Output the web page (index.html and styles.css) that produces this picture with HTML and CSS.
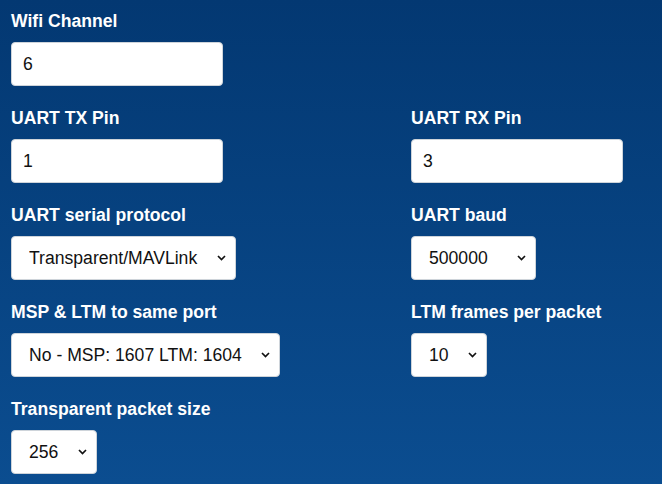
FILE: index.html
```html
<!DOCTYPE html>
<html>
<head>
<meta charset="utf-8">
<link rel="stylesheet" href="styles.css">
</head>
<body>
<div class="form">
  <div class="row">
    <div class="field">
      <label class="label">Wifi Channel</label>
      <input class="input" type="text" value="6">
    </div>
  </div>
  <div class="row">
    <div class="field">
      <label class="label">UART TX Pin</label>
      <input class="input" type="text" value="1">
    </div>
    <div class="field">
      <label class="label">UART RX Pin</label>
      <input class="input" type="text" value="3">
    </div>
  </div>
  <div class="row">
    <div class="field">
      <label class="label">UART serial protocol</label>
      <span class="select-wrap">
        <select class="select">
          <option>MSP/LTM</option>
          <option selected>Transparent/MAVLink</option>
        </select>
        <svg class="chevron" viewBox="0 0 9 6" width="9" height="6"><path d="M1 1 L4.5 4.5 L8 1" fill="none" stroke="#111" stroke-width="1.7"/></svg>
      </span>
    </div>
    <div class="field">
      <label class="label">UART baud</label>
      <span class="select-wrap">
        <select class="select">
          <option>9600</option>
          <option>19200</option>
          <option>38400</option>
          <option>57600</option>
          <option>115200</option>
          <option>230400</option>
          <option>460800</option>
          <option selected>500000</option>
          <option>921600</option>
          <option>1000000</option>
        </select>
        <svg class="chevron" viewBox="0 0 9 6" width="9" height="6"><path d="M1 1 L4.5 4.5 L8 1" fill="none" stroke="#111" stroke-width="1.7"/></svg>
      </span>
    </div>
  </div>
  <div class="row">
    <div class="field">
      <label class="label">MSP &amp; LTM to same port</label>
      <span class="select-wrap">
        <select class="select">
          <option selected>No - MSP: 1607 LTM: 1604</option>
          <option>Yes - to: 1604</option>
        </select>
        <svg class="chevron" viewBox="0 0 9 6" width="9" height="6"><path d="M1 1 L4.5 4.5 L8 1" fill="none" stroke="#111" stroke-width="1.7"/></svg>
      </span>
    </div>
    <div class="field">
      <label class="label">LTM frames per packet</label>
      <span class="select-wrap">
        <select class="select">
          <option>1</option>
          <option>2</option>
          <option>3</option>
          <option>4</option>
          <option>5</option>
          <option>6</option>
          <option>7</option>
          <option>8</option>
          <option>9</option>
          <option selected>10</option>
        </select>
        <svg class="chevron" viewBox="0 0 9 6" width="9" height="6"><path d="M1 1 L4.5 4.5 L8 1" fill="none" stroke="#111" stroke-width="1.7"/></svg>
      </span>
    </div>
  </div>
  <div class="row">
    <div class="field">
      <label class="label">Transparent packet size</label>
      <span class="select-wrap">
        <select class="select">
          <option>128</option>
          <option selected>256</option>
          <option>512</option>
        </select>
        <svg class="chevron" viewBox="0 0 9 6" width="9" height="6"><path d="M1 1 L4.5 4.5 L8 1" fill="none" stroke="#111" stroke-width="1.7"/></svg>
      </span>
    </div>
  </div>
</div>
</body>
</html>
```
FILE: styles.css
```css
html, body {
  margin: 0;
  height: 100%;
}
body {
  background: linear-gradient(to bottom, #033872 0%, #0b4d90 100%);
  font-family: "Liberation Sans", Arial, sans-serif;
  overflow: hidden;
}
.form {
  padding: 8px 11px 0;
}
.row {
  display: grid;
  grid-template-columns: 400px 1fr;
}
.field {
  display: flex;
  flex-direction: column;
  align-items: flex-start;
  margin-bottom: 18.5px;
}
.label {
  color: #fff;
  font-weight: bold;
  font-size: 17.6px;
  line-height: 26.4px;
  margin-bottom: 8px;
}
.input {
  box-sizing: border-box;
  width: 212px;
  height: 44px;
  border: 1px solid #ced4da;
  border-radius: 4px;
  background: #fff;
  padding: 0 11px;
  font-family: "Liberation Sans", Arial, sans-serif;
  font-size: 17.6px;
  color: #111;
  outline: none;
}
.select-wrap {
  position: relative;
  display: inline-block;
}
.select {
  -webkit-appearance: none;
  appearance: none;
  box-sizing: border-box;
  height: 44px;
  border: 1px solid #ced4da;
  border-radius: 4px;
  background: #fff;
  padding: 0 37px 0 17px;
  font-family: "Liberation Sans", Arial, sans-serif;
  font-size: 17.6px;
  color: #111;
  outline: none;
  display: block;
}
.chevron {
  position: absolute;
  right: 10px;
  top: 19px;
  pointer-events: none;
}
```
